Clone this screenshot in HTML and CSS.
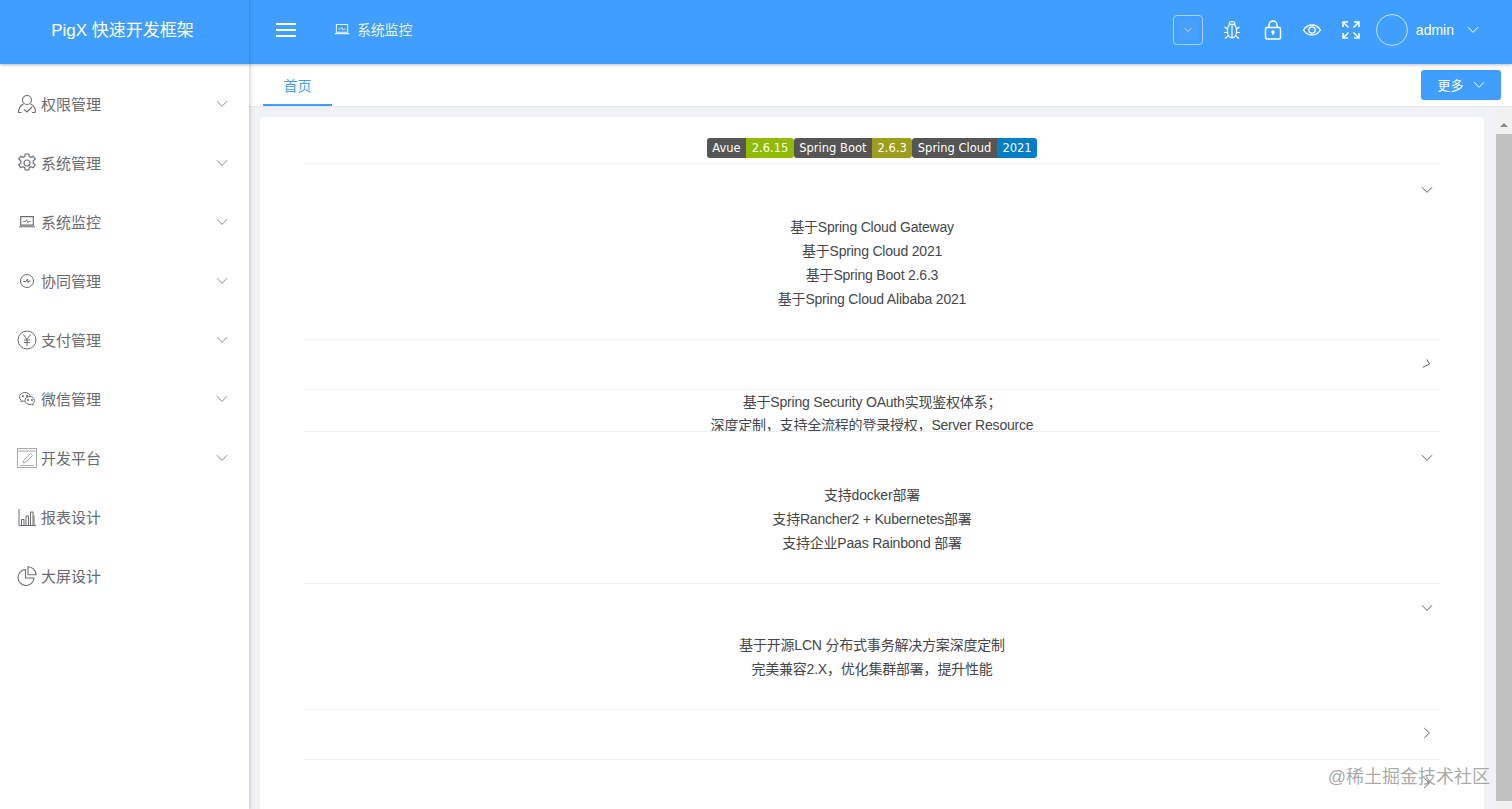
FILE: index.html
```html
<!DOCTYPE html>
<html lang="en">
<head>
    <meta charset="UTF-8">
    <meta name="viewport" content="width=device-width, initial-scale=1.0">
    <title>PigX</title>
    <link rel="stylesheet" href="styles.css">
</head>
<body>

<svg class="defs" aria-hidden="true">
    <symbol id="chev" viewBox="0 0 12 8"><path d="M1 1.2 6 6.4l5-5.2" fill="none" stroke="currentColor" stroke-width="1"/></symbol>
    <symbol id="laptop" viewBox="0 0 20 14"><path d="M3 1.5h14v9.5H3zM1 12.8h18" fill="none" stroke="currentColor" stroke-width="1.3"/><path d="M5.5 7h3l1-2 1.5 3.5 1-1.5h2.500" fill="none" stroke="currentColor" stroke-width=".9"/></symbol>
</svg>

<header class="topbar">
    <div class="logo">PigX 快速开发框架</div>
    <div class="topbar-main">
        <div class="hamburger"><span></span><span></span><span></span></div>
        <div class="crumb">
            <svg class="crumb-icon"><use href="#laptop"/></svg>
            <span>系统监控</span>
        </div>
        <div class="top-tools">
            <div class="select-box"><div class="select-inner"><svg class="select-chev"><use href="#chev"/></svg></div></div>
            <svg class="tool tool-bug" viewBox="0 0 20 20" fill="none" stroke="currentColor" stroke-width="1.2">
                <path d="M10 4c-3 0-4.600 3-4.600 7 0 4 2 7 4.600 7s4.600-3 4.600-7c0-4-1.600-7-4.600-7zM10 4v14M7 4.500C7 2.500 8.500 1.500 10 1.500s3 1 3 3M5.500 9 2.500 7M14.500 9l3-2M5.200 12.500H2M14.800 12.500H18M6 16l-3 2.500M14 16l3 2.500"/>
            </svg>
            <svg class="tool tool-lock" viewBox="0 0 20 20" fill="none" stroke="currentColor" stroke-width="1.4">
                <rect x="2.500" y="7.500" width="15" height="11.500" rx="1.500"/>
                <path d="M6 7.500V5a4 4 0 0 1 8 0v2.500"/>
                <circle cx="10" cy="12" r="1" fill="currentColor"/>
                <path d="M10 12v3"/>
            </svg>
            <svg class="tool tool-eye" viewBox="0 0 20 20" fill="none" stroke="currentColor" stroke-width="1.300">
                <path d="M1.500 10C3.500 6.800 6.500 5 10 5s6.500 1.800 8.500 5c-2 3.200-5 5-8.500 5s-6.500-1.800-8.500-5z"/>
                <circle cx="10" cy="10" r="3.200"/>
            </svg>
            <svg class="tool tool-full" viewBox="0 0 20 20" fill="none" stroke="currentColor" stroke-width="1.500">
                <path d="M2 7V2h5M2 2l5.500 5.500M13 2h5v5M18 2l-5.500 5.500M2 13v5h5M2 18l5.500-5.500M13 18h5v-5M18 18l-5.500-5.500"/>
            </svg>
            <div class="avatar"></div>
            <span class="username">admin</span>
            <svg class="user-chev"><use href="#chev"/></svg>
        </div>
    </div>
</header>

<div class="layout">
    <aside class="sidebar">
        <div class="menu-item">
            <svg class="menu-icon" viewBox="0 0 20 20" fill="none" stroke="currentColor" stroke-width="1.1">
                <circle cx="10" cy="6" r="4.500"/>
                <path d="M6.500 10C3.500 11.500 1.500 14.500 1.500 18.500h3M13.500 10c2.500 1.200 4.500 3.500 5 6.500l-.5 2h-3M7 15.500l3 2.500 5-5"/>
            </svg>
            <span class="menu-label">权限管理</span>
            <svg class="menu-chev"><use href="#chev"/></svg>
        </div>
        <div class="menu-item">
            <svg class="menu-icon" viewBox="0 0 20 20" fill="none" stroke="currentColor" stroke-width="1.200">
                <path d="M8.200 1h3.600l.5 2.500 1.700.8 2.300-1.100 1.900 3-2 1.600v2.400l2 1.600-1.900 3-2.300-1.100-1.700.8-.5 2.500H8.200l-.5-2.500-1.700-.8-2.300 1.100-1.900-3 2-1.600V7.800l-2-1.600 1.900-3L6 4.300l1.700-.8z"/>
                <circle cx="10" cy="10" r="3"/>
            </svg>
            <span class="menu-label">系统管理</span>
            <svg class="menu-chev"><use href="#chev"/></svg>
        </div>
        <div class="menu-item">
            <svg class="menu-icon"><use href="#laptop" x="1" y="3" width="18" height="13"/></svg>
            <span class="menu-label">系统监控</span>
            <svg class="menu-chev"><use href="#chev"/></svg>
        </div>
        <div class="menu-item">
            <svg class="menu-icon" viewBox="0 0 20 20" fill="none" stroke="currentColor" stroke-width="1">
                <circle cx="10" cy="10" r="6.500"/>
                <path d="M6.500 10.500H9l1.500-2.500.5 3.500 1-1.500h1.500"/>
            </svg>
            <span class="menu-label">协同管理</span>
            <svg class="menu-chev"><use href="#chev"/></svg>
        </div>
        <div class="menu-item">
            <svg class="menu-icon" viewBox="0 0 20 20" fill="none" stroke="currentColor" stroke-width="1">
                <circle cx="10" cy="10" r="9"/>
                <path d="M6.500 4.500 10 9.500l3.500-5M10 9.500V16M7 10h6M7 12.500h6"/>
            </svg>
            <span class="menu-label">支付管理</span>
            <svg class="menu-chev"><use href="#chev"/></svg>
        </div>
        <div class="menu-item">
            <svg class="menu-icon" viewBox="0 0 20 20" fill="none" stroke="currentColor" stroke-width="1">
                <path d="M8 3.500C4.800 3.500 2.500 5.500 2.500 8c0 1.300.7 2.500 1.800 3.300L4 13l1.900-1c.6.200 1.200.3 1.800.3"/>
                <path d="M13 7.500c-2.800 0-5 1.800-5 4s2.200 4 5 4c.6 0 1.100-.1 1.600-.2l1.600.9-.3-1.500c1-.7 1.600-2 1.600-3.200 0-2.200-2.100-4-4.500-4zM13.500 7.500C13 5.200 10.800 3.500 8 3.500"/>
                <circle cx="6" cy="7" r=".6" fill="currentColor"/>
                <circle cx="10" cy="7" r=".6" fill="currentColor"/>
                <circle cx="11" cy="11" r=".6" fill="currentColor"/>
                <circle cx="15" cy="11" r=".6" fill="currentColor"/>
            </svg>
            <span class="menu-label">微信管理</span>
            <svg class="menu-chev"><use href="#chev"/></svg>
        </div>
        <div class="menu-item">
            <svg class="menu-icon menu-icon-light" viewBox="0 0 20 20" fill="none" stroke="currentColor" stroke-width="1">
                <rect x=".5" y=".5" width="19" height="19"/>
                <path d="M1 3h18M6 15l1-3 6.500-6.500 2 2L9 14zM3 17.500h14"/>
            </svg>
            <span class="menu-label">开发平台</span>
            <svg class="menu-chev"><use href="#chev"/></svg>
        </div>
        <div class="menu-item">
            <svg class="menu-icon" viewBox="0 0 20 20" fill="none" stroke="currentColor" stroke-width="1">
                <path d="M2 2v16.500h17M4.500 12.500h2.500v6H4.500zM9 9h2.500v9.500H9zM13.500 5H16v13.500h-2.500zM17 8.500v10"/>
            </svg>
            <span class="menu-label">报表设计</span>
        </div>
        <div class="menu-item">
            <svg class="menu-icon" viewBox="0 0 20 20" fill="none" stroke="currentColor" stroke-width="1.100">
                <path d="M8.500 3.500a8 8 0 1 0 8.500 8.500H8.500z"/>
                <path d="M11 .8a8 8 0 0 1 8 8h-8z"/>
            </svg>
            <span class="menu-label">大屏设计</span>
        </div>
    </aside>

    <main class="main">
        <div class="tabs-bar">
            <div class="tab-active">首页</div>
            <button class="more-button"><span class="more-text">更多</span><svg class="more-chev"><use href="#chev"/></svg></button>
        </div>
        <div class="content-row">
            <div class="content">
                <div class="card">
                    <div class="badges">
                        <span class="badge badge-left">Avue</span><span class="badge badge-green">2.6.15</span><span class="badge badge-left">Spring Boot</span><span class="badge badge-olive">2.6.3</span><span class="badge badge-left">Spring Cloud</span><span class="badge badge-blue">2021</span>
                    </div>

                    <div class="collapse-item">
                        <div class="collapse-head"><svg class="arrow-down"><use href="#chev"/></svg></div>
                        <div class="collapse-body">
                            <p>基于Spring Cloud Gateway</p>
                            <p>基于Spring Cloud 2021</p>
                            <p>基于Spring Boot 2.6.3</p>
                            <p>基于Spring Cloud Alibaba 2021</p>
                        </div>
                    </div>

                    <div class="collapse-item">
                        <div class="collapse-head head-up">
                            <svg class="arrow-turning" viewBox="0 0 10 10"><path d="M.8 9.300 7.500 6 4.800 1.300" fill="none" stroke="currentColor" stroke-width="1"/></svg>
                        </div>
                        <div class="collapse-clip">
                            <p>基于Spring Security OAuth实现鉴权体系；</p>
                            <p>深度定制，支持全流程的登录授权，Server Resource</p>
                        </div>
                    </div>

                    <div class="collapse-item">
                        <div class="collapse-head"><svg class="arrow-down"><use href="#chev"/></svg></div>
                        <div class="collapse-body">
                            <p>支持docker部署</p>
                            <p>支持Rancher2 + Kubernetes部署</p>
                            <p>支持企业Paas Rainbond 部署</p>
                        </div>
                    </div>

                    <div class="collapse-item">
                        <div class="collapse-head head-up"><svg class="arrow-down"><use href="#chev"/></svg></div>
                        <div class="collapse-body body-tight">
                            <p>基于开源LCN 分布式事务解决方案深度定制</p>
                            <p>完美兼容2.X，优化集群部署，提升性能</p>
                        </div>
                    </div>

                    <div class="collapse-item">
                        <div class="collapse-head head-up"><svg class="arrow-right"><use href="#chev"/></svg></div>
                    </div>

                    <div class="collapse-item">
                        <div class="collapse-head head-up"><svg class="arrow-right"><use href="#chev"/></svg></div>
                    </div>
                </div>
            </div>
            <div class="scrollbar">
                <div class="scroll-up"></div>
                <div class="scroll-thumb"></div>
            </div>
        </div>
    </main>
</div>

<div class="watermark">@稀土掘金技术社区</div>

</body>
</html>
```

FILE: styles.css
```css
html, body {
    height: 100%;
}
body {
    font-family: "Liberation Sans", "Noto Sans CJK SC", sans-serif;
    margin: 0;
    background-color: #fff;
    overflow: hidden;
    display: flex;
    flex-direction: column;
}
p {
    margin: 0;
}
.defs {
    width: 0;
    height: 0;
    position: absolute;
}

/* top bar */
.topbar {
    height: 64px;
    flex: none;
    display: flex;
    background-color: #409eff;
    color: #fff;
    box-shadow: 0 1px 3px rgba(0, 0, 0, 0.25);
    position: relative;
    z-index: 3;
}
.logo {
    width: 245px;
    flex: none;
    padding-right: 4px;
    border-right: 1px solid #3a8fe6;
    text-align: center;
    font-size: 17px;
    line-height: 61px;
    box-shadow: 1px 0 3px rgba(0, 0, 0, 0.08);
}
.topbar-main {
    flex: 1;
    display: flex;
    align-items: center;
    padding-left: 26px;
    padding-bottom: 4px;
}
.hamburger {
    width: 20px;
    display: flex;
    flex-direction: column;
    gap: 4px;
}
.hamburger span {
    height: 2px;
    background-color: #fff;
}
.crumb {
    display: flex;
    align-items: center;
    margin-left: 40px;
    font-size: 14px;
    color: #e8f3ff;
    margin-top: -2px;
    letter-spacing: -0.2px;
}
.crumb-icon {
    width: 16px;
    height: 12px;
    margin-right: 7px;
    margin-left: -2px;
}
.top-tools {
    margin-left: auto;
    display: flex;
    align-items: center;
}
.select-box {
    width: 28px;
    height: 28px;
    border: 1px solid #a9d3ff;
    border-radius: 4px;
    display: flex;
    align-items: center;
    justify-content: center;
}
.select-inner {
    width: 20px;
    height: 20px;
    background-color: #4a9ff8;
    display: flex;
    align-items: center;
    justify-content: center;
}
.select-chev {
    width: 8px;
    height: 6px;
}
.tool {
    width: 20px;
    height: 20px;
}
.tool-bug {
    margin-left: 19px;
}
.tool-lock {
    margin-left: 21px;
}
.tool-eye {
    margin-left: 19px;
}
.tool-full {
    margin-left: 19px;
}
.avatar {
    width: 30px;
    height: 30px;
    border: 1px solid #c6e1ff;
    border-radius: 50%;
    margin-left: 15px;
}
.username {
    font-size: 14px;
    margin-left: 8px;
}
.user-chev {
    width: 12px;
    height: 8px;
    margin: 0 33px 0 13px;
}

/* sidebar */
.layout {
    flex: 1;
    display: flex;
    min-height: 0;
}
.sidebar {
    width: 249px;
    flex: none;
    padding-top: 10px;
    background-color: #fff;
    box-shadow: 1px 0 4px rgba(0, 0, 0, 0.2);
    position: relative;
    z-index: 2;
}
.menu-item {
    height: 59px;
    display: flex;
    align-items: center;
    padding-left: 17px;
    font-size: 15px;
    color: #696b6f;
}
.menu-icon {
    width: 20px;
    height: 20px;
    flex: none;
    margin-right: 4px;
    color: #6b6d71;
}
.menu-icon-light {
    color: #a8aaad;
}
.menu-label {
    width: 60px;
    white-space: nowrap;
    overflow: hidden;
}
.menu-chev {
    width: 12px;
    height: 8px;
    margin-left: 115px;
    margin-top: 1px;
    color: #8a8c90;
}

/* tabs */
.main {
    flex: 1;
    min-width: 0;
    display: flex;
    flex-direction: column;
}
.tabs-bar {
    height: 42px;
    flex: none;
    display: flex;
    justify-content: space-between;
    background-color: #fff;
    border-bottom: 1px solid #e4e7ed;
    padding-left: 14px;
    padding-right: 11px;
}
.tab-active {
    width: 69px;
    height: 40px;
    border-bottom: 2px solid #409eff;
    color: #409eff;
    font-size: 14px;
    line-height: 44px;
    text-align: center;
}
.more-button {
    width: 80px;
    height: 30px;
    margin-top: 6px;
    border: none;
    border-radius: 3px;
    background-color: #409eff;
    color: #fff;
    font-family: inherit;
    font-size: 13px;
    display: flex;
    align-items: center;
    justify-content: center;
    padding: 0;
}
.more-text {
    margin-top: -2px;
}
.more-chev {
    width: 12px;
    height: 8px;
    margin-left: 9px;
}

/* content */
.content-row {
    flex: 1;
    min-height: 0;
    display: flex;
}
.content {
    flex: 1;
    min-width: 0;
    background-color: #f0f2f5;
    padding: 10px 12px 0 11px;
    overflow: hidden;
}
.card {
    background-color: #fff;
    border-radius: 4px;
    padding: 21px 44px 0;
    height: 800px;
    color: #45474b;
    font-size: 14px;
    line-height: 24px;
    letter-spacing: -0.2px;
    text-align: center;
}
.badges {
    height: 25px;
    display: flex;
    justify-content: center;
    align-items: flex-start;
    font-family: "DejaVu Sans", sans-serif;
    font-size: 11.5px;
    line-height: 21px;
    letter-spacing: 0;
    color: #fff;
}
.badge {
    height: 20px;
    padding: 0 5.500px;
    white-space: nowrap;
}
.badge-left {
    background-color: #555;
    border-radius: 3px 0 0 3px;
}
.badge-green {
    background-color: #8fbc00;
    border-radius: 0 3px 3px 0;
}
.badge-olive {
    background-color: #9c9e1c;
    border-radius: 0 3px 3px 0;
}
.badge-blue {
    background-color: #007ec6;
    border-radius: 0 3px 3px 0;
}
.collapse-item {
    border-top: 1px solid #ebeef5;
}
.collapse-head {
    height: 49px;
    display: flex;
    align-items: center;
    justify-content: flex-end;
    padding-right: 7px;
    color: #606266;
}
.head-up {
    height: 45px;
    padding-bottom: 4px;
}
.collapse-body {
    padding: 2px 0 28px;
}
.body-tight {
    padding-top: 0;
}
.collapse-clip {
    height: 40px;
    padding-top: 1px;
    border-top: 1px solid #ebeef5;
    line-height: 23px;
    overflow: hidden;
}
.arrow-down {
    width: 12px;
    height: 8px;
    margin-top: 3px;
}
.arrow-right {
    width: 12px;
    height: 8px;
    transform: rotate(-90deg);
    margin-top: 1px;
}
.arrow-turning {
    width: 10px;
    height: 10px;
    margin: 0 1px;
}

/* scrollbar */
.scrollbar {
    width: 16px;
    flex: none;
    background-color: #f1f1f1;
    display: flex;
    flex-direction: column;
    align-items: center;
}
.scroll-up {
    width: 0;
    height: 0;
    margin-top: 16px;
    border-left: 4px solid transparent;
    border-right: 4px solid transparent;
    border-bottom: 4px solid #8a8a8a;
}
.scroll-thumb {
    width: 100%;
    height: 667px;
    margin-top: 7px;
    background-color: #c1c1c1;
}

/* overlay */
.watermark {
    position: absolute;
    right: 22px;
    top: 765px;
    font-size: 18px;
    line-height: 24px;
    color: rgba(120, 120, 120, 0.65);
    z-index: 5;
}
```
